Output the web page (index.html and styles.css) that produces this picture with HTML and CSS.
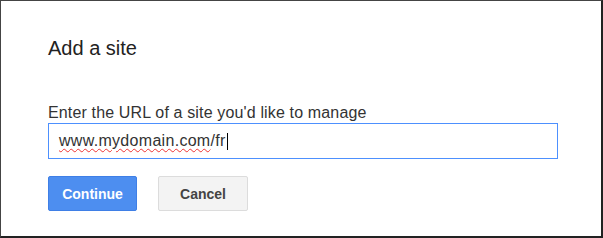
FILE: index.html
```html
<!DOCTYPE html>
<html lang="en">
<head>
    <meta charset="UTF-8">
    <title>Add a site</title>
    <link rel="stylesheet" href="styles.css">
</head>
<body>
    <div class="dialog">
        <h2 class="dialog__title">Add a site</h2>
        <p class="dialog__label">Enter the URL of a site you'd like to manage</p>
        <div class="field">
            <span class="field__typo">www.mydomain.com</span>/fr<span class="field__caret"></span>
        </div>
        <div class="dialog__actions">
            <button class="btn btn--primary">Continue</button>
            <button class="btn">Cancel</button>
        </div>
    </div>
</body>
</html>
```

FILE: styles.css
```css
*, ::after, ::before {
    box-sizing: border-box;
}
body{
    margin: 0;
    font-family: "Liberation Sans", Arial, sans-serif;
    background: #fff;
}
h2,p{
    margin: 0;
}
.dialog{
    width: 603px;
    height: 238px;
    border-top: 1px solid #444;
    border-left: 1px solid #444;
    border-right: 2px solid #222;
    border-bottom: 2px solid #222;
    padding: 35px 0 0 47px;
}
.dialog__title{
    font-size: 20px;
    line-height: 24px;
    font-weight: normal;
    color: #222;
}
.dialog__label{
    margin-top: 44px;
    font-size: 16px;
    line-height: 18px;
    letter-spacing: 0.15px;
    color: #333;
}
.field{
    margin-top: 1px;
    width: 510px;
    height: 36px;
    border: 1px solid #4d90fe;
    padding: 0 0 0 10px;
    display: flex;
    align-items: center;
    font-size: 16px;
    letter-spacing: 0.3px;
    color: #333;
}
.field__typo{
    text-decoration: underline wavy #e33;
    text-decoration-thickness: 1px;
    text-underline-offset: 2px;
}
.field__caret{
    display: inline-block;
    width: 1px;
    height: 17px;
    background: #000;
    margin-left: 1px;
}
.dialog__actions{
    margin-top: 17px;
    display: flex;
    gap: 21px;
}
.btn{
    height: 35px;
    width: 90px;
    border: 1px solid #dcdcdc;
    border-radius: 2px;
    background: #f3f3f3;
    color: #444;
    font-family: inherit;
    font-size: 14px;
    font-weight: bold;
    padding: 0;
}
.btn--primary{
    width: 89px;
    background: #4d8ef0;
    border-color: #3f7fe6;
    color: #fff;
}
```
